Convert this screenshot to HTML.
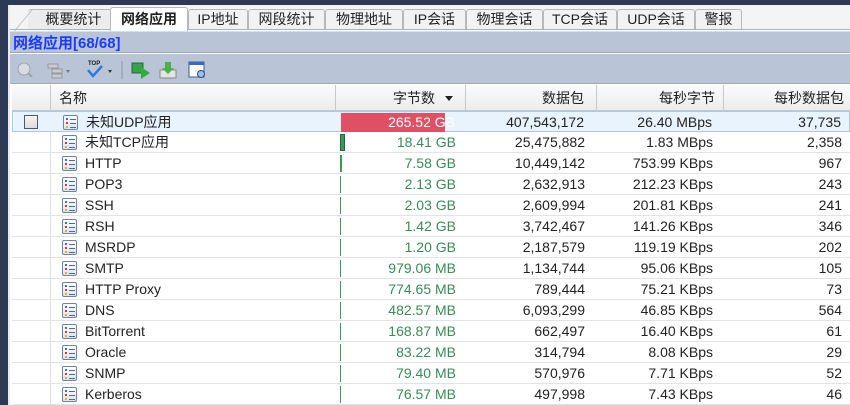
<!DOCTYPE html>
<html><head><meta charset="utf-8"><style>
*{margin:0;padding:0;box-sizing:border-box}
body{width:850px;height:405px;overflow:hidden;background:#fff;position:relative;font-family:"Liberation Sans","Noto Sans CJK SC",sans-serif;font-size:14px;color:#222}
.a{position:absolute}
.tab{position:absolute;top:9px;height:20px;border:1px solid #b8b8b8;border-bottom:none;background:#f2f2f2;text-align:center;line-height:19px;font-size:14px;color:#222;border-radius:3px 3px 0 0}
.row{position:absolute;left:12px;width:838px;height:21px;border-bottom:1px solid #e3e3e3}
.c{position:absolute;top:0;height:21px;line-height:21px;white-space:nowrap}
.ic{position:absolute;left:50px;top:3px;width:15px;height:15px;border:1px solid #6d82a4;background:linear-gradient(#fff,#dde4ee);border-radius:2px}
.ic i{position:absolute;left:2px;width:2px;height:2px}
.ic b{position:absolute;left:6px;width:6px;height:1px;background:#4a6a9a}
.hd{position:absolute;top:85px;height:26px;line-height:26px;background:linear-gradient(#fbfbfb,#ececec);border-right:1px solid #c8c8c8;border-bottom:1px solid #c8c8c8;font-size:14px}
</style></head><body>
<div class="a" style="left:0;top:0;width:850px;height:5px;background:#2c3a55"></div>
<div class="a" style="left:0;top:0;width:8px;height:405px;background:#2c3a55"></div>
<div class="a" style="left:8px;top:5px;width:2px;height:400px;background:#e8ecf2"></div>
<div class="a" style="left:10px;top:5px;width:840px;height:25px;background:#f4f4f4;border-bottom:1px solid #a8b2c2"></div>
<div class="tab" style="left:28px;width:84px;border-left:none;background:#ececec">&nbsp;&nbsp;概要统计</div>
<div class="a" style="left:14px;top:9px;width:1px;height:22px;border-left:1px solid #b8b8b8;transform:skewX(-40deg);transform-origin:bottom left"></div>
<div class="tab" style="left:110px;width:78px;background:#fff;font-weight:bold;top:7px;height:24px;line-height:22px;z-index:2">网络应用</div>
<div class="tab" style="left:188px;width:60px">IP地址</div>
<div class="tab" style="left:248px;width:77px">网段统计</div>
<div class="tab" style="left:325px;width:78px">物理地址</div>
<div class="tab" style="left:403px;width:63px">IP会话</div>
<div class="tab" style="left:466px;width:77px">物理会话</div>
<div class="tab" style="left:543px;width:74px">TCP会话</div>
<div class="tab" style="left:617px;width:78px">UDP会话</div>
<div class="tab" style="left:695px;width:47px">警报</div>
<div class="a" style="left:10px;top:31px;width:840px;height:22px;background:#b9c5d6;border-top:1px solid #d8dfe9;border-bottom:1px solid #9aa8bc"></div>
<div class="a" style="left:13px;top:32px;font-weight:bold;color:#1a3cff;font-size:15px">网络应用[68/68]</div>
<div class="a" style="left:10px;top:54px;width:840px;height:30px;background:#b9c5d6;border-bottom:1px solid #a0acbf"></div>
<svg class="a" style="left:14px;top:58px" width="200" height="24">
<circle cx="10" cy="11" r="6" fill="#d8dde4" stroke="#9aa2ac"/><line x1="14" y1="15" x2="18" y2="19" stroke="#9aa2ac" stroke-width="2"/>
<rect x="34" y="6" width="10" height="4" fill="#c8ccd2" stroke="#999"/><rect x="38" y="11" width="10" height="4" fill="#c8ccd2" stroke="#999"/><rect x="38" y="16" width="10" height="4" fill="#c8ccd2" stroke="#999"/>
<path d="M52 12 l4 0 l-2 3z" fill="#777"/>
<text x="74" y="7" font-size="6" font-weight="bold" fill="#222" font-family="Liberation Sans">TOP</text>
<path d="M74 12 l5 6 l9 -10" stroke="#2a7ad8" stroke-width="2.5" fill="none"/>
<path d="M94 12 l4 0 l-2 3z" fill="#333"/>
<line x1="108" y1="3" x2="108" y2="21" stroke="#8a96a8"/>
<rect x="118" y="5" width="11" height="10" fill="#3aa04a" stroke="#1e6e2e"/><path d="M127 9 l9 6 l-9 6z" fill="#2fae3e"/>
<path d="M146 12 h16 v8 h-16z" fill="#e4e4e4" stroke="#888"/><path d="M151 4 h6 v6 h3 l-6 6 l-6 -6 h3z" fill="#4cb04c"/>
<rect x="175" y="4" width="15" height="15" fill="#fff" stroke="#3a5a9a"/><rect x="175" y="4" width="15" height="3" fill="#3a6ac0"/><circle cx="187" cy="16" r="3.5" fill="#9ac0ea" stroke="#2a4a8a"/>
</svg>
<div class="hd" style="left:12px;width:39px"></div>
<div class="hd" style="left:51px;width:285px;padding-left:8px">名称</div>
<div class="hd" style="left:336px;width:130px;text-align:right;padding-right:30px">字节数</div>
<div class="a" style="left:445px;top:96px;border-left:4px solid transparent;border-right:4px solid transparent;border-top:5px solid #222"></div>
<div class="hd" style="left:466px;width:131px;text-align:right;padding-right:12px">数据包</div>
<div class="hd" style="left:597px;width:127px;text-align:right;padding-right:8px">每秒字节</div>
<div class="hd" style="left:724px;width:126px;text-align:right;padding-right:6px;border-right:none">每秒数据包</div>
<div class="a" style="left:50px;top:111px;width:1px;height:294px;background:#e0e0e0"></div>
<div id="rows"></div>
<script>
var d=[["未知UDP应用","265.52 GB","407,543,172","26.40 MBps","37,735",104],
["未知TCP应用","18.41 GB","25,475,882","1.83 MBps","2,358",5],
["HTTP","7.58 GB","10,449,142","753.99 KBps","967",2],
["POP3","2.13 GB","2,632,913","212.23 KBps","243",1],
["SSH","2.03 GB","2,609,994","201.81 KBps","241",1],
["RSH","1.42 GB","3,742,467","141.26 KBps","346",1],
["MSRDP","1.20 GB","2,187,579","119.19 KBps","202",1],
["SMTP","979.06 MB","1,134,744","95.06 KBps","105",1],
["HTTP Proxy","774.65 MB","789,444","75.21 KBps","73",1],
["DNS","482.57 MB","6,093,299","46.85 KBps","564",1],
["BitTorrent","168.87 MB","662,497","16.40 KBps","61",1],
["Oracle","83.22 MB","314,794","8.08 KBps","29",1],
["SNMP","79.40 MB","570,976","7.71 KBps","52",1],
["Kerberos","76.57 MB","497,998","7.43 KBps","46",1]];
var h="";
d.forEach(function(r,i){
var t=111+i*21,sel=i==0;
h+='<div class="row" style="top:'+t+'px;'+(sel?'background:#e9f3fd;border:1px solid #a9c9ea;':'')+'">';
if(sel)h+='<div class="a" style="left:11px;top:3px;width:14px;height:14px;border:1px solid #4a5a70;background:linear-gradient(#f4f4f4,#dcdcdc)"></div>';
h+='<div class="ic"><i style="top:2px;background:#3a6ad0"></i><i style="top:6px;background:#e03030"></i><i style="top:10px;background:#e0b020"></i><b style="top:3px"></b><b style="top:7px"></b><b style="top:11px"></b></div>';
h+='<div class="c" style="left:73px">'+r[0]+'</div>';
if(sel)h+='<div class="a" style="left:328px;top:1px;width:104px;height:19px;background:#e05064"></div>';
else h+='<div class="a" style="left:328px;top:2px;width:'+r[5]+'px;height:17px;background:#3a9a5a;border:'+(r[5]>2?'1px solid #1e6a3a':'0')+'"></div>';
h+='<div class="c" style="right:394px;color:'+(sel?'#fff':'#3a8a5a')+'">'+r[1]+'</div>';
h+='<div class="c" style="right:265px">'+r[2]+'</div>';
h+='<div class="c" style="right:137px">'+r[3]+'</div>';
h+='<div class="c" style="right:8px">'+r[4]+'</div>';
h+='</div>';});
document.getElementById("rows").innerHTML=h;
</script>
</body></html>
